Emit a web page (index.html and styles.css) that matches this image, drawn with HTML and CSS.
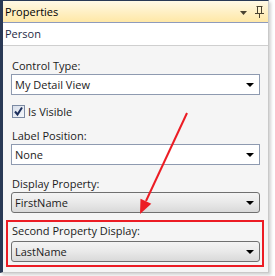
FILE: index.html
```html
<!DOCTYPE html>
<html lang="en">
<head>
    <meta charset="UTF-8">
    <title>Properties</title>
    <link rel="stylesheet" href="styles.css">
</head>
<body>
    <div class="page">
        <div class="window">
            <div class="titlebar">
                <span class="title">Properties</span>
                <span class="title-tools">
                    <svg class="menu-arrow" width="7" height="4" viewBox="0 0 7 4"><path d="M0 0h7L3.5 4z"/></svg>
                    <svg class="pin" width="9" height="12" viewBox="0 0 9 12">
                        <path d="M1.5 0.5h6M2.5 0.5v7M6.5 0.5v7M0 7.5h9M4.5 7.5v4.5" />
                    </svg>
                </span>
            </div>
            <div class="object-name">Person</div>

            <div class="props">
                <div class="field">
                    <div class="label">Control Type:</div>
                    <div class="combo combo-edit"><span>My Detail View</span><i class="drop"></i></div>
                </div>

                <div class="check">
                    <span class="box">
                        <svg width="11" height="11" viewBox="0 0 11 11"><path d="M2 5.5l2.5 3L9 1.5" /></svg>
                    </span>
                    <span>Is Visible</span>
                </div>

                <div class="field">
                    <div class="label">Label Position:</div>
                    <div class="combo combo-edit"><span>None</span><i class="drop"></i></div>
                </div>

                <div class="field">
                    <div class="label">Display Property:</div>
                    <div class="combo combo-button"><span>FirstName</span><i class="drop"></i></div>
                </div>

                <div class="highlight">
                    <div class="label">Second Property Display:</div>
                    <div class="combo combo-button"><span>LastName</span><i class="drop"></i></div>
                </div>
            </div>
        </div>

        <!-- red callout arrow drawn over the panel -->
        <svg class="callout" width="275" height="276" viewBox="0 0 275 276">
            <line x1="187" y1="113" x2="146" y2="201" />
            <polygon points="140,214 140.5,198.8 151.3,203.8" />
        </svg>
    </div>
</body>
</html>
```

FILE: styles.css
```css
:root {
    --frame-navy: #293955;
    --panel-bg: #f5f5f5;
    --text-color: #1b1b1b;
    --callout-red: #ec1c24;
}

body {
    margin: 0;
    padding: 0;
    background-color: #fff;
    font-family: "Open Sans", "Noto Sans", sans-serif;
    font-size: 11px;
    color: var(--text-color);
}

.page {
    position: relative;
    width: 275px;
    height: 276px;
}

.window {
    width: 269px;
    height: 273px;
    box-sizing: border-box;
    border-left: 3px solid var(--frame-navy);
    border-top: 1px solid var(--frame-navy);
    border-right: 1px solid #c9c9c9;
    border-bottom: 1px solid #c9c9c9;
    background-color: var(--panel-bg);
    box-shadow: 2px 2px 3px rgba(0, 0, 0, 0.18);
    display: flex;
    flex-direction: column;
}

.titlebar {
    height: 21px;
    display: flex;
    align-items: center;
    justify-content: space-between;
    padding: 0 4px 0 2px;
    background: linear-gradient(#fff9e6, #ffe8a6);
    border-bottom: 1px solid #8e9bbc;
    color: #000;
}

.title-tools {
    display: flex;
    align-items: center;
    gap: 8px;
}

.menu-arrow {
    fill: #4a4331;
    margin-top: 2px;
}

.pin {
    fill: none;
    stroke: #4a4331;
    stroke-width: 1;
    margin-top: 1px;
}

.object-name {
    height: 22px;
    line-height: 22px;
    padding-left: 2px;
    background-color: #fff;
    border-bottom: 1px solid #cfcfcf;
    color: #1e2b45;
}

.props {
    display: flex;
    flex-direction: column;
    padding: 13px 8px 0 8px;
}

.field {
    display: flex;
    flex-direction: column;
}

.label {
    line-height: 14px;
    height: 14px;
    padding-left: 1px;
    margin-bottom: 1px;
}

.combo {
    height: 21px;
    box-sizing: border-box;
    display: flex;
    align-items: center;
    justify-content: space-between;
    padding: 0 5px 0 3px;
}

.combo-edit {
    background-color: #fff;
    border: 1px solid #8e9ab0;
}

.combo-button {
    background: linear-gradient(#f4f4f4, #e9e9e9 50%, #d9d9d9);
    border: 1px solid #707070;
    border-radius: 3px;
}

.drop {
    width: 0;
    height: 0;
    border-left: 4px solid transparent;
    border-right: 4px solid transparent;
    border-top: 4px solid #000;
}

.check {
    display: flex;
    align-items: center;
    gap: 3px;
    height: 13px;
    margin: 10px 0 11px 1px;
}

.box {
    width: 13px;
    height: 13px;
    box-sizing: border-box;
    border: 1px solid #7b8aa3;
    background: linear-gradient(135deg, #d7deea, #f6f8fb);
    display: flex;
    align-items: center;
    justify-content: center;
}

.box svg {
    fill: none;
    stroke: #1c2f5c;
    stroke-width: 2;
}

.field + .field {
    margin-top: 12px;
}

.highlight {
    display: flex;
    flex-direction: column;
    margin: 7px 0 0 -5px;
    width: 258px;
    box-sizing: border-box;
    border: 2px solid var(--callout-red);
    padding: 2px 2px 3px 3px;
}

.highlight .label {
    margin-bottom: 3px;
}

.callout {
    position: absolute;
    top: 0;
    left: 0;
    pointer-events: none;
}

.callout line {
    stroke: var(--callout-red);
    stroke-width: 2;
}

.callout polygon {
    fill: var(--callout-red);
}
```
